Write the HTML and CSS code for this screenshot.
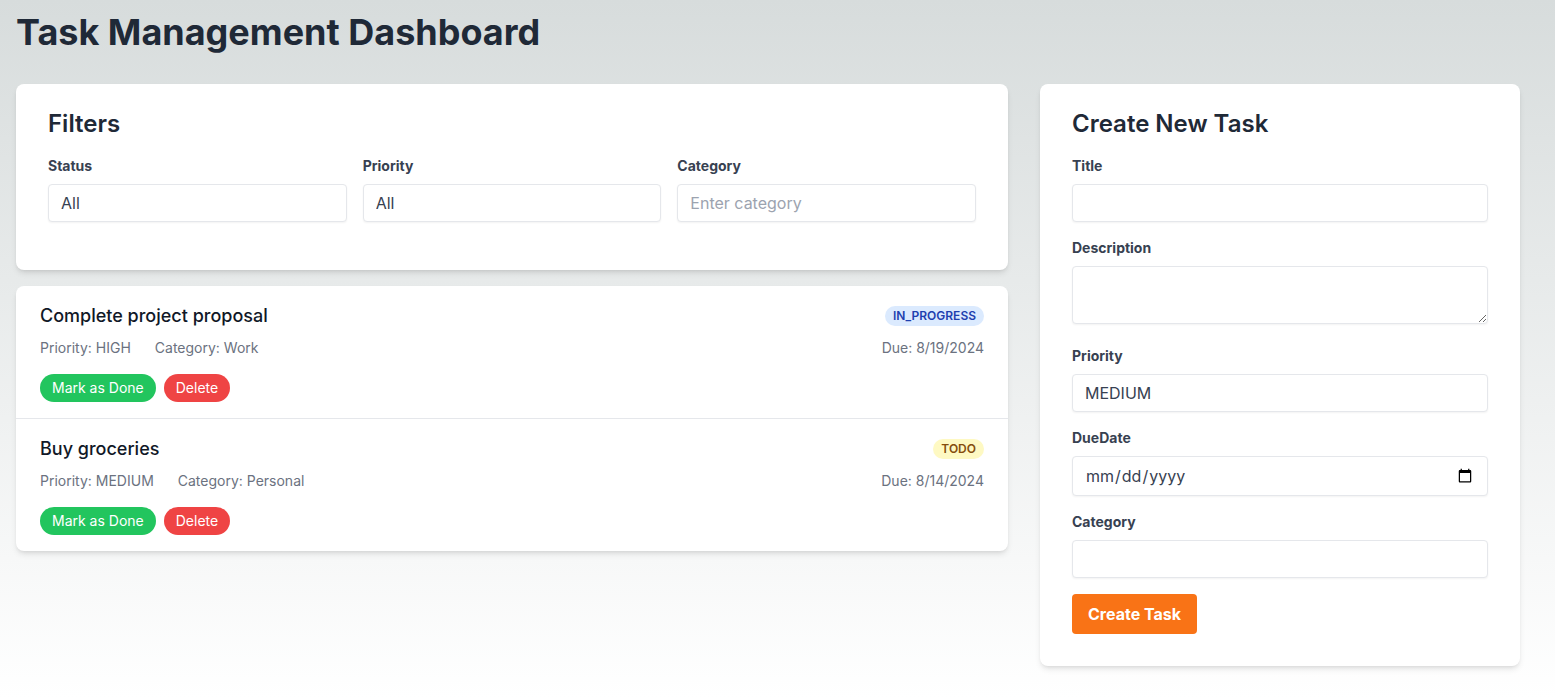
FILE: index.html
```html
<!DOCTYPE html>
<html lang="en">
<head>
<meta charset="utf-8">
<meta name="viewport" content="width=device-width, initial-scale=1">
<title>Task Management Dashboard</title>
<link rel="stylesheet" href="styles.css">
</head>
<body>
<main class="page">
  <h1 class="page-title">Task Management Dashboard</h1>
  <div class="layout">
    <div class="main-column">
      <section class="card filters">
        <h2 class="card-title">Filters</h2>
        <div class="filter-grid">
          <div class="field">
            <label class="label" for="filter-status">Status</label>
            <select class="control" id="filter-status"><option>All</option><option>TODO</option><option>IN_PROGRESS</option><option>DONE</option></select>
          </div>
          <div class="field">
            <label class="label" for="filter-priority">Priority</label>
            <select class="control" id="filter-priority"><option>All</option><option>LOW</option><option>MEDIUM</option><option>HIGH</option></select>
          </div>
          <div class="field">
            <label class="label" for="filter-category">Category</label>
            <input class="control" id="filter-category" type="text" placeholder="Enter category">
          </div>
        </div>
      </section>
      <ul class="task-list">
        <li class="task">
          <div class="task-row">
            <h3 class="task-title">Complete project proposal</h3>
            <span class="badge badge-progress">IN_PROGRESS</span>
          </div>
          <div class="task-row task-meta">
            <div class="meta-group"><span>Priority: HIGH</span><span>Category: Work</span></div>
            <span>Due: 8/19/2024</span>
          </div>
          <div class="task-actions">
            <button class="pill pill-done" type="button">Mark as Done</button>
            <button class="pill pill-delete" type="button">Delete</button>
          </div>
        </li>
        <li class="task">
          <div class="task-row">
            <h3 class="task-title">Buy groceries</h3>
            <span class="badge badge-todo">TODO</span>
          </div>
          <div class="task-row task-meta">
            <div class="meta-group"><span>Priority: MEDIUM</span><span>Category: Personal</span></div>
            <span>Due: 8/14/2024</span>
          </div>
          <div class="task-actions">
            <button class="pill pill-done" type="button">Mark as Done</button>
            <button class="pill pill-delete" type="button">Delete</button>
          </div>
        </li>
      </ul>
    </div>
    <form class="card create-form">
      <h2 class="card-title">Create New Task</h2>
      <div class="field">
        <label class="label" for="title">Title</label>
        <input class="control" id="title" type="text">
      </div>
      <div class="field">
        <label class="label" for="description">Description</label>
        <textarea class="control control-area" id="description" rows="2"></textarea>
      </div>
      <div class="field">
        <label class="label" for="priority">Priority</label>
        <select class="control" id="priority"><option>LOW</option><option selected>MEDIUM</option><option>HIGH</option></select>
      </div>
      <div class="field">
        <label class="label" for="due-date">DueDate</label>
        <input class="control control-date" id="due-date" type="date">
      </div>
      <div class="field">
        <label class="label" for="category">Category</label>
        <input class="control" id="category" type="text">
      </div>
      <button class="submit" type="submit">Create Task</button>
    </form>
  </div>
</main>
</body>
</html>
```
FILE: styles.css
```css
*, *::before, *::after {
  box-sizing: border-box;
}

body {
  margin: 0;
  min-height: 100vh;
  font-family: Inter, "Liberation Sans", sans-serif;
  font-size: 16px;
  line-height: 24px;
  color: #1f2937;
  background: linear-gradient(to bottom, #d7dcdc, #ffffff) no-repeat;
}

h1, h2, h3, ul {
  margin: 0;
  padding: 0;
  font-weight: inherit;
}

input, select, textarea, button {
  margin: 0;
  font: inherit;
  color: inherit;
}

.page {
  max-width: 1536px;
  padding: 12px 16px 32px;
}

.page-title {
  margin-bottom: 32px;
  font-size: 36px;
  line-height: 40px;
  font-weight: 700;
}

.layout {
  display: grid;
  grid-template-columns: repeat(3, minmax(0, 1fr));
  gap: 32px;
  align-items: start;
}

.main-column {
  grid-column: span 2;
  display: grid;
  gap: 16px;
}

.card {
  padding: 24px 32px 32px;
  border-radius: 8px;
  background: #ffffff;
  box-shadow: 0 4px 6px -1px rgb(0 0 0 / 10%), 0 2px 4px -2px rgb(0 0 0 / 10%);
}

.card-title {
  margin-bottom: 16px;
  font-size: 24px;
  line-height: 32px;
  font-weight: 600;
}

.filter-grid {
  display: grid;
  grid-template-columns: repeat(3, minmax(0, 1fr));
  gap: 16px;
}

.field {
  margin-bottom: 16px;
}

.label {
  display: block;
  margin-bottom: 8px;
  font-size: 14px;
  line-height: 20px;
  font-weight: 700;
  color: #374151;
}

.control {
  display: block;
  width: 100%;
  padding: 8px 12px;
  border: 1px solid #e5e7eb;
  border-radius: 4px;
  background: #ffffff;
  box-shadow: 0 1px 2px rgb(0 0 0 / 5%);
  color: #374151;
  line-height: 20px;
  appearance: none;
}

.control::placeholder {
  color: #9ca3af;
}

.control-area {
  margin-bottom: 22px;
  resize: vertical;
}

.control-date {
  height: 40px;
}

.task-list {
  list-style: none;
  border-radius: 8px;
  background: #ffffff;
  box-shadow: 0 4px 6px -1px rgb(0 0 0 / 10%), 0 2px 4px -2px rgb(0 0 0 / 10%);
}

.task {
  padding: 16px 24px;
}

.task + .task {
  border-top: 1px solid #e5e7eb;
}

.task-row {
  display: flex;
  justify-content: space-between;
  align-items: center;
}

.task-title {
  font-size: 18px;
  line-height: 28px;
  font-weight: 500;
  color: #111827;
}

.badge {
  padding: 0 8px;
  border-radius: 10px;
  font-size: 12px;
  line-height: 20px;
  font-weight: 600;
}

.badge-progress {
  background: #dbeafe;
  color: #1e40af;
}

.badge-todo {
  background: #fef9c3;
  color: #854d0e;
}

.task-meta {
  margin-top: 8px;
  font-size: 14px;
  line-height: 20px;
  color: #6b7280;
}

.meta-group {
  display: flex;
  gap: 24px;
}

.task-actions {
  display: flex;
  gap: 8px;
  margin-top: 16px;
}

.pill {
  padding: 4px 12px;
  border: 0;
  border-radius: 14px;
  font-size: 14px;
  line-height: 20px;
  color: #ffffff;
}

.pill-done {
  background: #22c55e;
}

.pill-delete {
  background: #ef4444;
}

.submit {
  padding: 8px 16px;
  border: 0;
  border-radius: 4px;
  background: #f97316;
  color: #ffffff;
  font-weight: 700;
}

@media (max-width: 900px) {
  .layout {
    grid-template-columns: minmax(0, 1fr);
  }

  .main-column {
    grid-column: auto;
  }
}
```
